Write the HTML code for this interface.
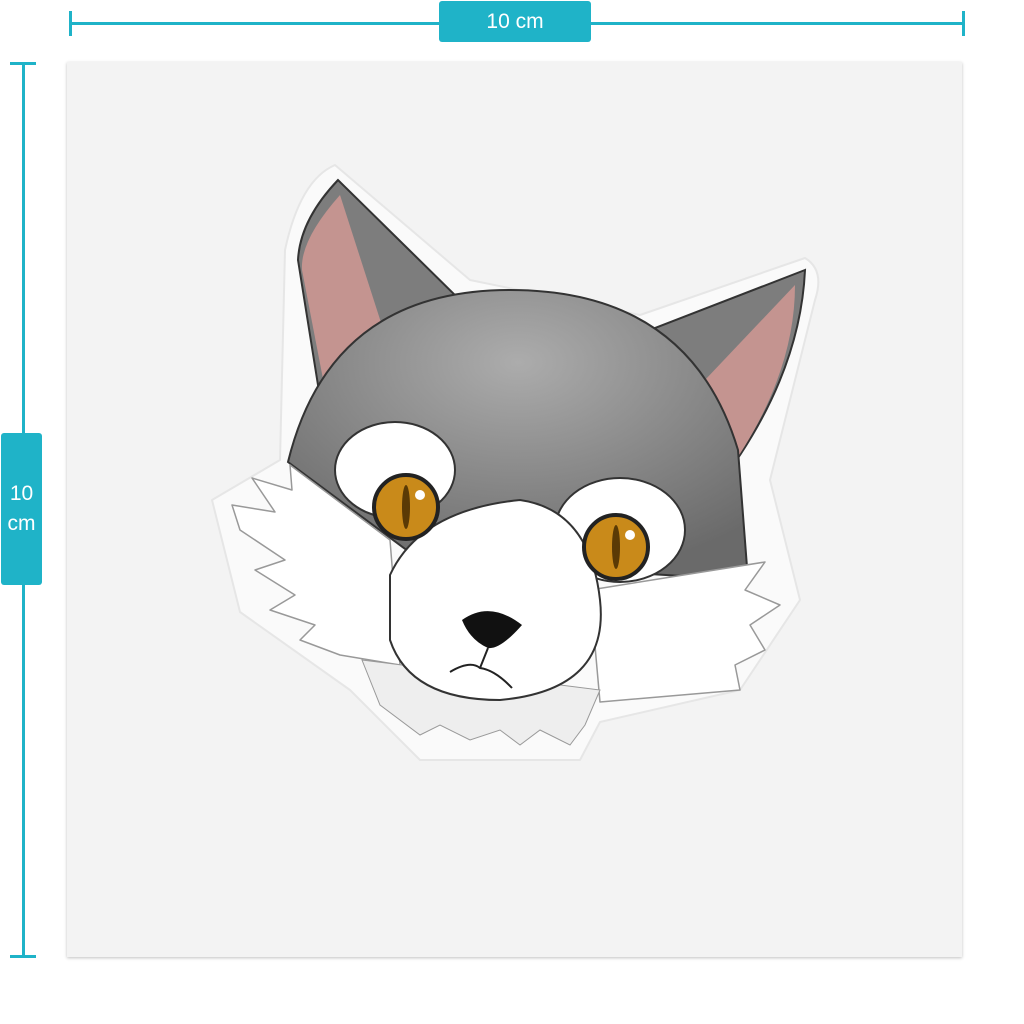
<!DOCTYPE html>
<html><head><style>
body{margin:0;width:1024px;height:1024px;background:#fff;position:relative;overflow:hidden;font-family:"Liberation Sans",sans-serif}
.c{position:absolute;background:#1fb3c8}
.lbl{position:absolute;background:#1fb3c8;color:#fff;border-radius:3px;display:flex;align-items:center;justify-content:center;font-size:21px;text-align:center;line-height:30px}
.card{position:absolute;left:67px;top:62px;width:895px;height:895px;background:#f3f3f3;box-shadow:0 1px 3px rgba(0,0,0,.25)}
</style></head><body>
<div class="c" style="left:70px;top:22px;width:894px;height:3px"></div>
<div class="c" style="left:69px;top:11px;width:3px;height:25px"></div>
<div class="c" style="left:962px;top:11px;width:3px;height:25px"></div>
<div class="lbl" style="left:439px;top:1px;width:152px;height:41px">10 cm</div>
<div class="c" style="left:22px;top:63px;width:3px;height:894px"></div>
<div class="c" style="left:10px;top:62px;width:26px;height:3px"></div>
<div class="c" style="left:10px;top:955px;width:26px;height:3px"></div>
<div class="lbl" style="left:1px;top:433px;width:41px;height:152px;flex-direction:column">10<br>cm</div>
<div class="card"></div>
<svg style="position:absolute;left:0;top:0" width="1024" height="1024">
<defs><radialGradient id="g" cx="0.5" cy="0.25" r="0.75"><stop offset="0" stop-color="#acacac"/><stop offset="1" stop-color="#6a6a6a"/></radialGradient></defs>
<path d="M285 250 Q300 180 335 165 L470 280 L640 315 L805 258 Q825 270 815 300 L770 480 L800 600 L740 690 L600 722 L580 760 L420 760 L350 690 L240 612 L212 500 L280 460 Z" fill="#fafafa" stroke="#e6e6e6" stroke-width="2" stroke-linejoin="round"/>
<path d="M338 180 Q300 220 298 260 L322 410 L460 300 Z" fill="#7d7d7d" stroke="#333" stroke-width="2"/>
<path d="M340 195 Q300 240 302 270 L328 405 L385 335 Z" fill="#c49490"/>
<path d="M805 270 L650 330 L715 490 Q800 380 805 270 Z" fill="#7d7d7d" stroke="#333" stroke-width="2"/>
<path d="M795 285 L705 380 L722 480 Q795 380 795 285 Z" fill="#c49490"/>
<path d="M288 462 Q330 290 510 290 Q690 290 738 450 L748 580 L420 560 Z" fill="url(#g)" stroke="#333" stroke-width="2"/>
<ellipse cx="395" cy="470" rx="60" ry="48" fill="#fff" stroke="#333" stroke-width="2"/>
<ellipse cx="620" cy="530" rx="65" ry="52" fill="#fff" stroke="#333" stroke-width="2"/>
<path d="M232 505 L275 512 L252 478 L292 490 L290 465 L390 540 L400 665 L340 655 L300 640 L315 625 L270 610 L295 595 L255 570 L285 560 L240 530 Z" fill="#fff" stroke="#999" stroke-width="1.5" stroke-linejoin="round"/>
<path d="M590 590 L765 562 L745 590 L780 605 L750 625 L765 650 L735 665 L740 690 L600 702 Z" fill="#fff" stroke="#999" stroke-width="1.5" stroke-linejoin="round"/>
<path d="M362 660 L600 690 L585 725 L570 745 L540 730 L520 745 L500 730 L470 740 L440 725 L420 735 L380 705 Z" fill="#eeeeee" stroke="#999"/>
<path d="M390 575 Q420 510 520 500 Q590 510 600 600 Q610 690 500 700 Q410 700 390 640 Z" fill="#fff" stroke="#333" stroke-width="2"/>
<circle cx="406" cy="507" r="32" fill="#c98a1a" stroke="#222" stroke-width="4"/>
<ellipse cx="406" cy="507" rx="4" ry="22" fill="#5a3a05"/>
<circle cx="420" cy="495" r="5" fill="#fff"/>
<circle cx="616" cy="547" r="32" fill="#c98a1a" stroke="#222" stroke-width="4"/>
<ellipse cx="616" cy="547" rx="4" ry="22" fill="#5a3a05"/>
<circle cx="630" cy="535" r="5" fill="#fff"/>
<path d="M462 620 Q490 600 522 625 Q500 650 488 648 Q470 640 462 620 Z" fill="#111"/>
<path d="M488 648 L480 668 M450 672 Q470 660 480 668 Q495 670 512 688" stroke="#222" stroke-width="2" fill="none"/>
</svg>
</body></html>
